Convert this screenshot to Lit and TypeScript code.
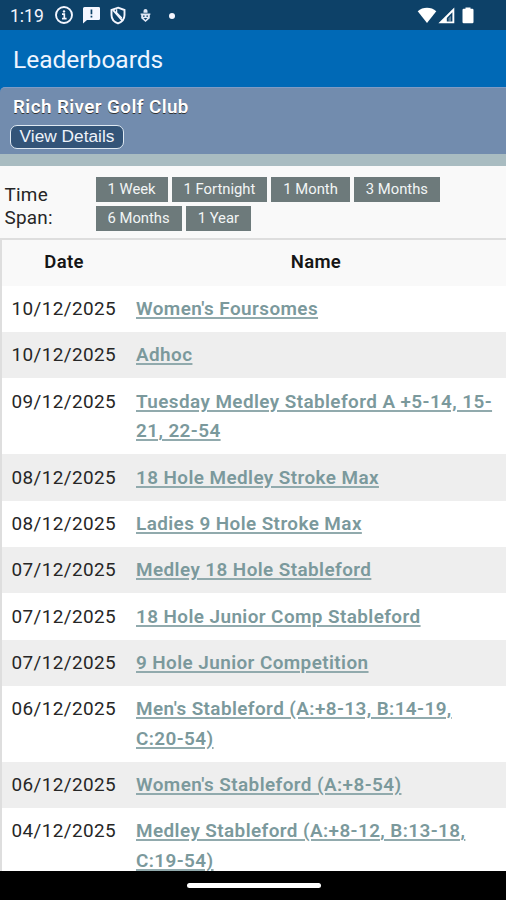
import { LitElement, html, css } from "lit";
import { customElement } from "lit/decorators.js";

interface Entry {
  date: string;
  lines: string[];
}

const SPANS = ["1 Week", "1 Fortnight", "1 Month", "3 Months", "6 Months", "1 Year"];

const ENTRIES: Entry[] = [
  { date: "10/12/2025", lines: ["Women's Foursomes"] },
  { date: "10/12/2025", lines: ["Adhoc"] },
  { date: "09/12/2025", lines: ["Tuesday Medley Stableford A +5-14, 15-", "21, 22-54"] },
  { date: "08/12/2025", lines: ["18 Hole Medley Stroke Max"] },
  { date: "08/12/2025", lines: ["Ladies 9 Hole Stroke Max"] },
  { date: "07/12/2025", lines: ["Medley 18 Hole Stableford"] },
  { date: "07/12/2025", lines: ["18 Hole Junior Comp Stableford"] },
  { date: "07/12/2025", lines: ["9 Hole Junior Competition"] },
  { date: "06/12/2025", lines: ["Men's Stableford (A:+8-13, B:14-19,", "C:20-54)"] },
  { date: "06/12/2025", lines: ["Women's Stableford (A:+8-54)"] },
  { date: "04/12/2025", lines: ["Medley Stableford (A:+8-12, B:13-18,", "C:19-54)"] },
];

@customElement("status-bar")
class StatusBar extends LitElement {
  static styles = css`
    :host {
      display: flex;
      align-items: center;
      justify-content: space-between;
      height: 30px;
      box-sizing: border-box;
      padding: 0 32px 0 10px;
      background: #0d4168;
      color: #f4f6ff;
      font-size: 17.500px;
    }
    .group { display: flex; align-items: center; }
    .time { width: 44px; line-height: 30px; padding-top: 1px; }
    svg { display: block; }
    .info { margin-right: 9px; }
    .message { margin-right: 10px; }
    .shield { margin-right: 14px; }
    .bug { margin-right: 18px; }
    .dot { width: 6px; height: 6px; border-radius: 50%; background: #f4f6ff; margin-top: 1px; }
    .wifi { margin-right: 1px; }
    .signal { margin-right: 7px; }
  `;
  render() {
    return html`
      <div class="group">
        <span class="time">1:19</span>
        <svg class="info" width="20" height="20" viewBox="0 0 20 20" fill="none" stroke="#f4f6ff">
          <circle cx="10" cy="10" r="8" stroke-width="1.900" />
          <path d="M8 9.200h2.300v4.500M8 13.700h4.600" stroke-width="1.700" />
          <circle cx="10" cy="6.400" r="1.200" fill="#f4f6ff" stroke="none" />
        </svg>
        <svg class="message" width="17" height="18" viewBox="0 0 17 18" fill="#f4f6ff">
          <path fill-rule="evenodd" d="M1.500 1h14.200Q17 1 17 2.300V12.700Q17 14 15.700 14H4L0 17.500V2.500Q0 1 1.500 1ZM7.600 3.500v4.700h1.700V3.500ZM7.600 9.700v1.800h1.700V9.700Z" />
        </svg>
        <svg class="shield" width="16" height="19" viewBox="0 0 16 19" fill="none" stroke="#f4f6ff" stroke-width="1.900">
          <path d="M8 1.700 14.500 4v5c0 4.200-2.700 7-6.500 8.400C4.200 16 1.500 13.200 1.500 9V4Z" />
          <path d="M3.200 4.200 12.600 14.800" />
          <path d="M6.600 3.200v3.600l5.200 5.200" stroke-width="1.300" />
        </svg>
        <svg class="bug" width="11" height="15" viewBox="0 0 11 15" fill="#e0e7f6">
          <path d="M3.500 4.800V3a2 2 0 0 1 4 0v1.800Z" />
          <path fill-rule="evenodd" d="M.6 5.500h9.800v1.200H9.800v3.500L5.500 14 1.200 10.200V6.700H.6ZM3 7.500v1.200h1.600V7.500ZM6.400 7.500v1.200H8V7.500ZM3.600 10l1.900 1.900 1.900-1.900Z" />
        </svg>
        <span class="dot"></span>
      </div>
      <div class="group">
        <svg class="wifi" width="20" height="17" viewBox="0 0 20 17" fill="#fff">
          <path d="M.7 4.300C5.800-.3 14.200-.3 19.300 4.300L10 16Z" />
        </svg>
        <svg class="signal" width="17" height="17" viewBox="0 0 17 17" fill="#fff">
          <path fill-rule="evenodd" d="M16.300.5V16.300H.4ZM14.400 5.200 8.800 10.900v3.500h5.600Z" />
          <path d="M10.500 11.200 13 8.800v5.600h-2.500Z" fill-opacity=".35" />
        </svg>
        <svg width="12" height="17" viewBox="0 0 12 17" fill="#fff">
          <path d="M3.500.5h5v1.300h1.800q1.200 0 1.200 1.200v12.100q0 1.200-1.200 1.200H1.700q-1.200 0-1.200-1.200V3q0-1.200 1.200-1.200h1.800Z" />
        </svg>
      </div>
    `;
  }
}

@customElement("leader-row")
class LeaderRow extends LitElement {
  static properties = { entry: { attribute: false } };
  declare entry: Entry;
  static styles = css`
    :host {
      display: grid;
      grid-template-columns: 124px 1fr;
      padding: 8.300px 0;
      line-height: 29.700px;
      flex: none;
    }
    .date { padding-left: 9.500px; font-size: 18.900px; letter-spacing: 0.400px; color: #262626; }
    .name {
      padding-left: 10px;
      font-size: 18.900px;
      font-weight: 600;
      letter-spacing: 0.420px;
    }
    .link {
      color: #7b999c;
      text-decoration: underline;
      text-decoration-color: #91aaad;
      text-decoration-thickness: 1.500px;
      text-underline-offset: 2px;
      white-space: nowrap;
    }
  `;
  render() {
    return html`
      <span class="date">${this.entry.date}</span>
      <span class="name"><a class="link">${this.entry.lines.map((l, i) => (i ? html`<br />${l}` : l))}</a></span>
    `;
  }
}

@customElement("app-root")
class AppRoot extends LitElement {
  static styles = css`
    :host {
      display: flex;
      flex-direction: column;
      width: 506px;
      height: 900px;
      overflow: hidden;
      background: #f9f9f9;
      font-family: Roboto, "Liberation Sans", sans-serif;
    }
    status-bar, .title, .club, .strip, .filter, .nav { flex: none; }
    .title {
      height: 57px;
      line-height: 60px;
      padding-left: 13px;
      background: #0069b6;
      color: #eef5ff;
      font-size: 24.500px;
    }
    .club {
      height: 67px;
      box-sizing: border-box;
      padding: 8px 0 0 10px;
      background: #728cae;
      border-top: 1px solid #7f9bc4;
      border-radius: 5px 0 0 0;
    }
    .club-wrap { background: #0069b6; flex: none; }
    .club-name {
      padding-left: 3px;
      color: #fff;
      font-size: 18.800px;
      letter-spacing: 0.430px;
      font-weight: 600;
      line-height: 22px;
      text-shadow: 0 1px 0 #333;
    }
    .details {
      display: block;
      margin-top: 7px;
      width: 114px;
      height: 24px;
      box-sizing: border-box;
      border: 1.500px solid #dfe9f2;
      border-radius: 7px;
      background: #335478;
      color: #eef3fa;
      text-align: center;
      font: 17.300px/21px "Liberation Sans", Arial, sans-serif;
      white-space: nowrap;
    }
    .strip { height: 12px; background: #a9bcc1; }
    .filter { display: flex; height: 72px; }
    .label {
      width: 95.500px;
      box-sizing: border-box;
      padding: 17px 0 0 4.500px;
      font-size: 18.900px;
      letter-spacing: 0.250px;
      line-height: 23px;
      color: #262626;
    }
    .spans {
      display: flex;
      flex-wrap: wrap;
      align-content: flex-start;
      gap: 4px;
      width: 360px;
      padding-top: 10.500px;
    }
    .span {
      height: 25px;
      box-sizing: border-box;
      padding: 0 12px;
      background: #6d7a7b;
      color: #f2f5f5;
      font-size: 14.800px;
      line-height: 25px;
    }
    .table {
      display: flex;
      flex-direction: column;
      flex: 1;
      min-height: 0;
      overflow: hidden;
      border-left: 2px solid #dedede;
      border-top: 2px solid #dedede;
    }
    .head {
      display: grid;
      grid-template-columns: 124px 1fr;
      flex: none;
      height: 45.800px;
      line-height: 45px;
      text-align: center;
      font-size: 18.500px;
      letter-spacing: 0.300px;
      font-weight: 600;
      color: #161616;
    }
    .odd { background: #fff; }
    .even { background: #eee; }
    .nav {
      display: flex;
      align-items: center;
      justify-content: center;
      height: 29px;
      background: #000;
      padding-left: 1px;
    }
    .pill { width: 134px; height: 5px; border-radius: 3px; background: #fff; }
  `;
  render() {
    return html`
      <status-bar></status-bar>
      <div class="title">Leaderboards</div>
      <div class="club-wrap">
        <div class="club">
          <div class="club-name">Rich River Golf Club</div>
          <span class="details">View Details</span>
        </div>
      </div>
      <div class="strip"></div>
      <div class="filter">
        <div class="label">Time<br />Span:</div>
        <div class="spans">${SPANS.map((s) => html`<span class="span">${s}</span>`)}</div>
      </div>
      <div class="table">
        <div class="head"><span>Date</span><span>Name</span></div>
        ${ENTRIES.map((e, i) => html`<leader-row class=${i % 2 ? "even" : "odd"} .entry=${e}></leader-row>`)}
      </div>
      <div class="nav"><div class="pill"></div></div>
    `;
  }
}
